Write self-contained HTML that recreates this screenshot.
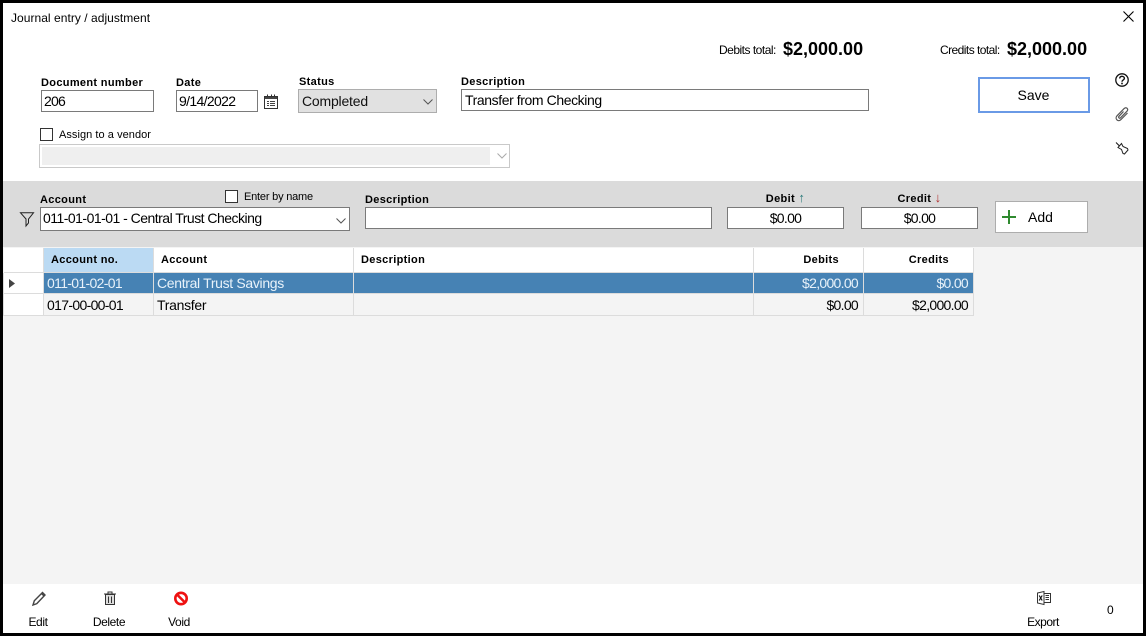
<!DOCTYPE html>
<html><head><meta charset="utf-8">
<style>
html,body{margin:0;padding:0;background:#fff}
#p{position:relative;width:1146px;height:636px;overflow:hidden;background:#fff;font-family:"Liberation Sans",sans-serif;color:#000}
#p div{position:absolute;box-sizing:border-box}
.t{white-space:nowrap;line-height:16px;height:16px}
.b{font-weight:bold;font-size:11px;letter-spacing:.33px}
.s{font-size:14px}
.x{font-size:12px}
.d{letter-spacing:-.7px}
.inp{background:#fff;border:1px solid #7a7a7a}
.r{text-align:right}
.c{text-align:center}
svg{position:absolute;overflow:visible}
.ar{font-size:13px;font-weight:normal;line-height:0}
</style></head><body>
<div id="p">
<div style="left:3px;top:181px;width:1140px;height:66px;background:#dbdbdb"></div>
<div style="left:3px;top:247px;width:1140px;height:337px;background:#f4f4f4"></div>

<div class="t x" style="left:11px;top:10px;letter-spacing:.04px">Journal entry / adjustment</div>
<svg style="left:1123px;top:11px" width="11" height="11"><path d="M.5.5 10.500 10.500M10.500.5.5 10.500" stroke="#000" stroke-width="1.100" fill="none"/></svg>

<div class="t" style="left:719px;top:42px;font-size:12px;letter-spacing:-.5px">Debits total:</div>
<div class="t" style="left:783px;top:41px;font-size:18px;font-weight:bold">$2,000.00</div>
<div class="t" style="left:940px;top:42px;font-size:12px;letter-spacing:-.55px">Credits total:</div>
<div class="t" style="left:1007px;top:41px;font-size:18px;font-weight:bold">$2,000.00</div>

<div class="t b" style="left:41px;top:75px">Document number</div>
<div class="inp" style="left:41px;top:90px;width:113px;height:22px"></div>
<div class="t s" style="left:44px;top:93px;letter-spacing:-.8px">206</div>
<div class="t b" style="left:176px;top:75px">Date</div>
<div class="inp" style="left:176px;top:90px;width:82px;height:22px"></div>
<div class="t s" style="left:179px;top:93px;letter-spacing:-.65px">9/14/2022</div>
<svg style="left:264px;top:94px" width="14" height="15"><path d="M.5 2.500h13v12H.5z" fill="#fff" stroke="#333"/><path d="M1 3h12v2H1z" fill="#444"/><path d="M3.500.5v2M7.500.5v2M10.500.5v2" stroke="#333"/><path d="M3 7.500h2M6 7.500h5M3 9.500h2M6 9.500h5M3 11.500h2M6 11.500h5" stroke="#444"/></svg>
<div class="t b" style="left:299px;top:74px">Status</div>
<div style="left:298px;top:89px;width:139px;height:24px;background:#e1e1e1;border:1px solid #adadad"></div>
<div class="t s" style="left:302px;top:93px;color:#111;letter-spacing:-.2px">Completed</div>
<svg style="left:423px;top:99px" width="10" height="6"><path d="M.5.5 5 5 9.500.5" fill="none" stroke="#555"/></svg>
<div class="t b" style="left:461px;top:74px">Description</div>
<div class="inp" style="left:461px;top:89px;width:408px;height:22px"></div>
<div class="t s" style="left:465px;top:92px;letter-spacing:-.41px">Transfer from Checking</div>

<div style="left:978px;top:77px;width:112px;height:36px;border:2px solid #6a9ae6;background:#fff"></div>
<div class="t s c" style="left:978px;top:87px;width:111px">Save</div>

<svg style="left:1115px;top:73px" width="14" height="14"><circle cx="7" cy="7" r="6.200" fill="none" stroke="#111" stroke-width="1.300"/><path d="M4.700 5.500C4.700 4 5.800 3.300 7 3.300S9.400 4.200 9.400 5.400C9.400 6.900 7 7 7 8.700" fill="none" stroke="#111" stroke-width="1.400"/><path d="M6.200 9.700h1.600v1.600H6.200z" fill="#111"/></svg>
<svg style="left:1115px;top:107px" width="14" height="15"><path d="M8.500 4.500 4 9.300C3 10.600 4.400 11.800 5.500 10.800L12 4.200C13.800 2 11.400-.4 9.200 1.500L2 8.800C-.6 11.700 3 15.400 5.800 12.700L12.500 6" fill="none" stroke="#555" stroke-width="1.200"/></svg>
<svg style="left:1115px;top:141px" width="14" height="15"><path d="M1 1.500 5.500 6" stroke="#111" fill="none"/><path d="M3 6.500 6.500 2.500 8 5.500 12.500 7.500 13 9 9.500 13 8 12.500 6.500 8.500Z" fill="#fff" stroke="#222"/></svg>

<div style="left:40px;top:128px;width:13px;height:13px;border:1px solid #333;background:#fff"></div>
<div class="t" style="left:59px;top:127px;font-size:11px;letter-spacing:.05px">Assign to a vendor</div>
<div style="left:39px;top:144px;width:471px;height:24px;background:#fff;border:1px solid #c9c9c9"></div>
<div style="left:42px;top:147px;width:448px;height:18px;background:#efefef"></div>
<svg style="left:497px;top:153px" width="10" height="6"><path d="M.5.5 5 5 9.500.5" fill="none" stroke="#aaa"/></svg>

<div class="t b" style="left:40px;top:192px">Account</div>
<div style="left:225px;top:190px;width:13px;height:13px;border:1px solid #333;background:#fff"></div>
<div class="t" style="left:244px;top:189px;font-size:11px;letter-spacing:-.2px">Enter by name</div>
<svg style="left:20px;top:212px" width="14" height="15"><path d="M.5.800h13L8.500 7v4L6 14V7Z" fill="none" stroke="#222"/></svg>
<div class="inp" style="left:40px;top:207px;width:310px;height:24px"></div>
<div class="t s" style="left:43px;top:210px;letter-spacing:-.52px">011-01-01-01 - Central Trust Checking</div>
<svg style="left:336px;top:218px" width="10" height="6"><path d="M.5.5 5 5 9.500.5" fill="none" stroke="#555"/></svg>

<div class="t b" style="left:365px;top:192px">Description</div>
<div class="inp" style="left:365px;top:207px;width:347px;height:22px"></div>
<div class="t b c" style="left:727px;top:191px;width:117px">Debit <span class="ar" style="color:#2a7a7a">↑</span></div>
<div class="inp" style="left:727px;top:207px;width:117px;height:22px"></div>
<div class="t s c d" style="left:727px;top:210px;width:117px">$0.00</div>
<div class="t b c" style="left:861px;top:191px;width:117px">Credit <span class="ar" style="color:#b03030">↓</span></div>
<div class="inp" style="left:861px;top:207px;width:117px;height:22px"></div>
<div class="t s c d" style="left:861px;top:210px;width:117px">$0.00</div>
<div style="left:995px;top:201px;width:93px;height:32px;background:#fff;border:1px solid #adadad"></div>
<svg style="left:1002px;top:210px" width="14" height="14"><path d="M7 0v14M0 7h14" stroke="#2f8a2f" stroke-width="2"/></svg>
<div class="t s" style="left:1028px;top:209px">Add</div>

<div style="left:3px;top:248px;width:971px;height:68px;background:#f4f4f4"></div>
<div style="left:4px;top:248px;width:970px;height:24px;background:#fff"></div>
<div style="left:44px;top:248px;width:110px;height:24px;background:#bbdaf3"></div>
<div style="left:44px;top:273px;width:930px;height:20px;background:#4682b4"></div>
<div style="left:4px;top:293px;width:970px;height:1px;background:#dcdcdc"></div>
<div style="left:4px;top:315px;width:970px;height:1px;background:#dcdcdc"></div>
<div style="left:4px;top:272px;width:970px;height:1px;background:#dcdcdc"></div>
<div style="left:4px;top:273px;width:40px;height:20px;background:#fff"></div>
<div style="left:4px;top:294px;width:40px;height:21px;background:#fff"></div>
<div style="left:3px;top:273px;width:1px;height:43px;background:#dcdcdc"></div>
<div style="left:43px;top:248px;width:1px;height:68px;background:#dcdcdc"></div>
<div style="left:153px;top:248px;width:1px;height:68px;background:#dcdcdc"></div>
<div style="left:353px;top:248px;width:1px;height:68px;background:#dcdcdc"></div>
<div style="left:753px;top:248px;width:1px;height:68px;background:#dcdcdc"></div>
<div style="left:863px;top:248px;width:1px;height:68px;background:#dcdcdc"></div>
<div style="left:973px;top:248px;width:1px;height:68px;background:#dcdcdc"></div>
<svg style="left:9px;top:279px" width="6" height="9"><path d="M0 0 6 4.500 0 9Z" fill="#444"/></svg>

<div class="t b" style="left:51px;top:252px">Account no.</div>
<div class="t b" style="left:161px;top:252px">Account</div>
<div class="t b" style="left:361px;top:252px">Description</div>
<div class="t b r" style="left:754px;top:252px;width:85px">Debits</div>
<div class="t b r" style="left:864px;top:252px;width:85px">Credits</div>

<div class="t s" style="left:47px;top:275px;color:#e8f2fa;letter-spacing:-.67px">011-01-02-01</div>
<div class="t s" style="left:157px;top:275px;color:#e8f2fa;letter-spacing:-.33px">Central Trust Savings</div>
<div class="t s r d" style="left:754px;top:275px;width:104px;color:#e8f2fa">$2,000.00</div>
<div class="t s r d" style="left:864px;top:275px;width:104px;color:#e8f2fa">$0.00</div>
<div class="t s" style="left:47px;top:297px;letter-spacing:-.67px">017-00-00-01</div>
<div class="t s" style="left:157px;top:297px;letter-spacing:-.3px">Transfer</div>
<div class="t s r d" style="left:754px;top:297px;width:104px">$0.00</div>
<div class="t s r d" style="left:864px;top:297px;width:104px">$2,000.00</div>

<div style="left:3px;top:584px;width:1140px;height:49px;background:#fff"></div>
<svg style="left:32px;top:591px" width="14" height="15"><path d="M1 14 2.300 9.800 10.500 1.500 13 4 4.800 12.600ZM9.500 2.500 12 5" fill="none" stroke="#444" stroke-width="1.400"/></svg>
<div class="t x c" style="left:18px;top:614px;width:40px;letter-spacing:-.4px">Edit</div>
<svg style="left:104px;top:591px" width="12" height="15"><path d="M0 3h12M4 3V1h4v2" fill="none" stroke="#333"/><path d="M1.500 3.500h9v10H1.500z" fill="#ddd" stroke="#333"/><path d="M4.500 5.500v6.500M7.500 5.500v6.500" stroke="#333"/></svg>
<div class="t x c" style="left:84px;top:614px;width:50px;letter-spacing:-.4px">Delete</div>
<svg style="left:173px;top:590px" width="16" height="16"><circle cx="8" cy="8.500" r="5.700" fill="none" stroke="#e11" stroke-width="2.600"/><path d="M4 4.500 12 12.500" stroke="#e11" stroke-width="2.600"/></svg>
<div class="t x c" style="left:159px;top:614px;width:40px;letter-spacing:-.4px">Void</div>
<svg style="left:1037px;top:591px" width="14" height="14"><path d="M.5 2 7 .5v13L.5 12Z" fill="#fff" stroke="#333"/><path d="M7 2.500h6.500v9H7z" fill="#fff" stroke="#333"/><path d="M2.200 4.500 5.200 9.500M5.200 4.500 2.200 9.500" stroke="#111" stroke-width="1.200"/><path d="M8.500 4.500h3.500M8.500 6.500h3.500M8.500 8.500h3.500" stroke="#333"/></svg>
<div class="t x c" style="left:1023px;top:614px;width:40px;letter-spacing:-.5px">Export</div>
<div class="t x" style="left:1107px;top:602px">0</div>

<div style="left:0;top:0;width:1146px;height:636px;border:3px solid #000;background:transparent"></div>
</div>
</body></html>
